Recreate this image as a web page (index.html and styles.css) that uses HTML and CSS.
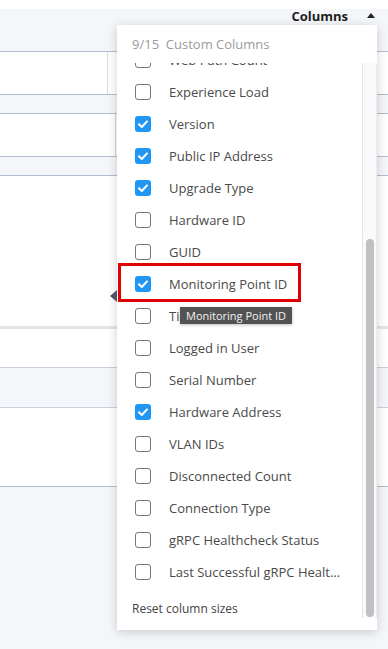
FILE: index.html
```html
<!DOCTYPE html>
<html lang="en">
  <head>
    <meta charset="UTF-8" />
    <meta name="viewport" content="width=device-width, initial-scale=1.0" />
    <title>Columns</title>
    <link rel="stylesheet" href="styles.css">
  </head>
  <body>
    <div class="topstrip"></div>
    <div class="toolbar">
      <button class="columns-toggle">Columns <span class="caret"></span></button>
    </div>

    <!-- table behind the menu -->
    <div class="grid">
      <div class="row row-data row-short"><div class="cell cell-a"></div></div>
      <div class="row row-band"></div>
      <div class="row row-data row-short"><div class="cell cell-b"></div></div>
      <div class="row row-band"></div>
      <div class="row row-data row-tall"></div>
      <div class="row row-sep"></div>
      <div class="row row-data row-mid"></div>
      <div class="row row-band row-band-soft"></div>
      <div class="row row-data row-last"></div>
    </div>

    <div class="menu">
      <div class="menu-head">9/15&nbsp; Custom Columns</div>
      <div class="menu-body">
        <div class="menu-scroll">
          <ul class="col-list">
            <li class="col-item"><span class="check"></span>Web Path Count</li>
            <li class="col-item"><span class="check"></span>Experience Load</li>
            <li class="col-item"><span class="check on"></span>Version</li>
            <li class="col-item"><span class="check on"></span>Public IP Address</li>
            <li class="col-item"><span class="check on"></span>Upgrade Type</li>
            <li class="col-item"><span class="check"></span>Hardware ID</li>
            <li class="col-item"><span class="check"></span>GUID</li>
            <li class="col-item"><span class="check on"></span>Monitoring Point ID</li>
            <li class="col-item"><span class="check"></span>Timezone</li>
            <li class="col-item"><span class="check"></span>Logged in User</li>
            <li class="col-item"><span class="check"></span>Serial Number</li>
            <li class="col-item"><span class="check on"></span>Hardware Address</li>
            <li class="col-item"><span class="check"></span>VLAN IDs</li>
            <li class="col-item"><span class="check"></span>Disconnected Count</li>
            <li class="col-item"><span class="check"></span>Connection Type</li>
            <li class="col-item"><span class="check"></span>gRPC Healthcheck Status</li>
            <li class="col-item"><span class="check"></span><span class="col-name">Last Successful gRPC Healthcheck</span></li>
          </ul>
          <div class="reset">Reset column sizes</div>
        </div>
        <div class="scroll-track"><div class="scroll-thumb"></div></div>
      </div>
    </div>

    <div class="highlight"></div>
    <div class="pointer"></div>
    <div class="tooltip">Monitoring Point ID</div>

    <script>
      // draw the tick inside every checked box
      document.querySelectorAll(".check.on").forEach(function (box) {
        box.innerHTML =
          '<svg width="16" height="16" viewBox="0 0 16 16"><polyline points="4,8.3 6.8,11 12,5.4" fill="none" stroke="#fff" stroke-width="2" stroke-linecap="round" stroke-linejoin="round"/></svg>';
      });
    </script>
  </body>
</html>
```

FILE: styles.css
```css
* {
  margin: 0;
  padding: 0;
  box-sizing: border-box;
}

body {
  font-family: "Open Sans", "Noto Sans", Arial, sans-serif;
  background: #f5f6fa;
  width: 388px;
  height: 649px;
  overflow: hidden;
  position: relative;
}

.topstrip {
  height: 9px;
  background: #fff;
}

.toolbar {
  height: 42px;
  display: flex;
  justify-content: flex-end;
  align-items: flex-start;
  padding-right: 13px;
}

.columns-toggle {
  font-family: inherit;
  font-size: 13px;
  font-weight: 700;
  line-height: 14px;
  color: #1e1e1e;
  background: none;
  border: none;
  display: flex;
  align-items: center;
  gap: 19px;
}

.caret {
  width: 0;
  height: 0;
  border-left: 4px solid transparent;
  border-right: 4px solid transparent;
  border-bottom: 5px solid #222;
  margin-top: -2px;
}

/* Table rows behind the menu */
.grid {
  border-top: 1px solid #b3bed1;
}

.row {
  border-bottom: 1px solid #b3bed1;
}

.row-data {
  background: #fff;
}

.row-short {
  height: 43px;
}

.row-band {
  height: 19px;
  background: #f5f6fa;
}

.row-tall {
  height: 150px;
  border-bottom: none;
}

.row-sep {
  height: 3px;
  background: #e5e5e5;
  border-bottom: none;
}

.row-mid {
  height: 39px;
  border-bottom: 1px solid #cad0dc;
}

.row-band-soft {
  height: 40px;
  border-bottom: 1px solid #cad0dc;
}

.row-last {
  height: 79px;
}

.cell {
  height: 100%;
  border-right: 1px solid #dcdcdc;
}

.cell-a {
  width: 108px;
}

.cell-b {
  width: 116px;
}

/* Column chooser menu */
.menu {
  position: absolute;
  left: 117px;
  top: 25px;
  width: 260px;
  height: 605px;
  background: #fff;
  box-shadow: 0 2px 10px rgba(0, 0, 0, 0.18);
  display: flex;
  flex-direction: column;
  padding-bottom: 12px;
}

.menu-head {
  height: 38px;
  padding-left: 15px;
  display: flex;
  align-items: center;
  font-size: 13px;
  color: #9b9b9b;
}

.menu-body {
  flex: 1;
  display: flex;
  overflow: hidden;
}

.menu-scroll {
  flex: 1;
  overflow: hidden;
}

.col-list {
  list-style: none;
  margin-top: -19px;
}

.col-item {
  height: 32px;
  display: flex;
  align-items: center;
  gap: 18px;
  padding-left: 18px;
  font-size: 13px;
  color: #4a4a4a;
  white-space: nowrap;
}

.col-name {
  width: 172px;
  overflow: hidden;
  text-overflow: ellipsis;
}

.check {
  width: 16px;
  height: 16px;
  flex-shrink: 0;
  border: 1px solid #767676;
  border-radius: 3px;
  background: #fff;
}

.check.on {
  border: none;
  background: #2196f3;
}

.check svg {
  display: block;
}

.reset {
  padding: 13px 15px 0;
  font-size: 12px;
  line-height: 16px;
  color: #444;
}

.scroll-track {
  width: 15px;
  background: #fafafa;
  border-left: 1px solid #e6e6e6;
  border-right: 1px solid #ececec;
  padding-top: 176px;
  padding-left: 3px;
}

.scroll-thumb {
  width: 8px;
  height: 378px;
  border-radius: 4px;
  background: #c1c1c1;
}

/* Overlays */
.highlight {
  position: absolute;
  left: 118px;
  top: 263px;
  width: 183px;
  height: 39px;
  border: 3px solid #e00000;
}

.pointer {
  position: absolute;
  left: 110px;
  top: 290px;
  width: 0;
  height: 0;
  border-top: 6px solid transparent;
  border-bottom: 6px solid transparent;
  border-right: 7px solid #4b5365;
}

.tooltip {
  position: absolute;
  left: 180px;
  top: 307px;
  height: 17px;
  padding: 0 6px;
  background: #525252;
  color: #f2f2f2;
  font-size: 11px;
  line-height: 17px;
  box-shadow: 0 1px 3px rgba(0, 0, 0, 0.25);
  white-space: nowrap;
}
```
